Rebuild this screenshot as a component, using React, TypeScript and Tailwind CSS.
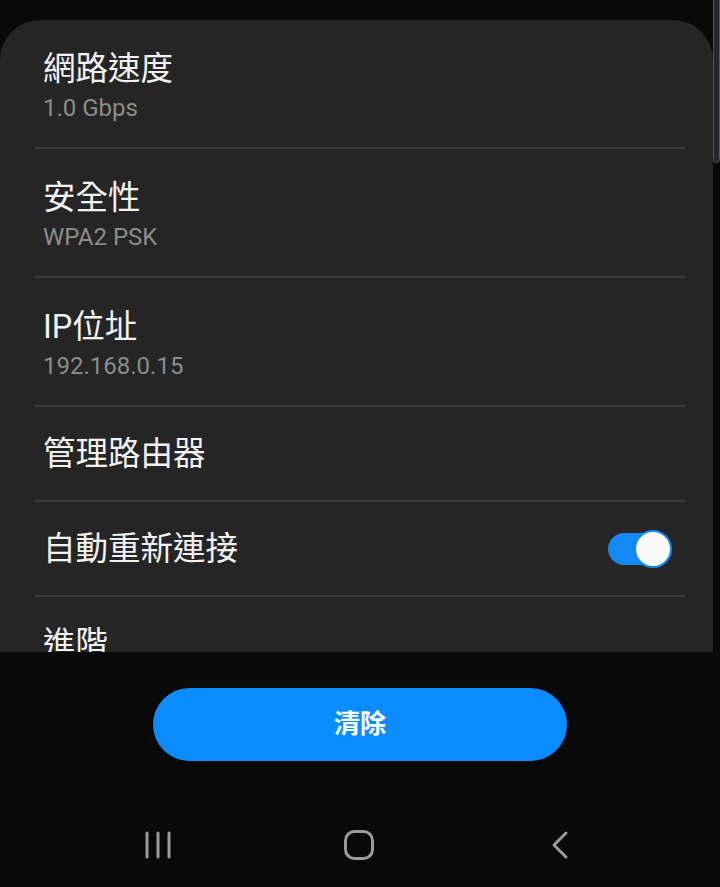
import React from "react";

const font = { fontFamily: "Roboto, 'Noto Sans CJK TC', sans-serif" };

function Divider() {
  return <div className="ml-[35px] mr-[28px] h-[2px] bg-[#3a3a3a]" />;
}

function TwoLine({ title, sub }: { title: string; sub: string }) {
  return (
    <div className="h-[127px] px-[43px] pt-[29px]">
      <div className="text-[32.5px] leading-[40px] text-[#f2f2f2]">{title}</div>
      <div className="mt-[3px] text-[24px] leading-[32px] text-[#8c8c8c]">{sub}</div>
    </div>
  );
}

export default function App() {
  return (
    <div className="w-[720px] h-[887px] bg-[#090909] flex flex-col relative overflow-hidden" style={font}>
      <div className="absolute right-[0px] top-[-10px] w-[7px] h-[173px] rounded-[4px] border border-[#55555c] bg-[#26262c]" />
      <div className="mt-[20px] mr-[7px] h-[632px] rounded-t-[40px] bg-[#252525] overflow-hidden shrink-0">
        <TwoLine title="網路速度" sub="1.0 Gbps" />
        <Divider />
        <TwoLine title="安全性" sub="WPA2 PSK" />
        <Divider />
        <TwoLine title="IP位址" sub="192.168.0.15" />
        <Divider />
        <div className="h-[93px] px-[43px] flex items-center">
          <div className="text-[32.5px] leading-[40px] text-[#f2f2f2]">管理路由器</div>
        </div>
        <Divider />
        <div className="h-[93px] pl-[43px] pr-[41px] flex items-center justify-between">
          <div className="text-[32.5px] leading-[40px] text-[#f2f2f2]">自動重新連接</div>
          <div className="relative w-[64px] h-[38px] flex items-center">
            <div className="w-[62px] h-[32px] rounded-full bg-[#1488f5]" />
            <div className="absolute right-0 top-0 w-[38px] h-[38px] rounded-full bg-[#fafafa] border-[2px] border-[#1488f5]" />
          </div>
        </div>
        <Divider />
        <div className="px-[43px] pt-[27px]">
          <div className="text-[32.5px] leading-[40px] text-[#f2f2f2]">進階</div>
        </div>
      </div>
      <div className="flex justify-center pt-[36px]">
        <div className="w-[414px] h-[73px] rounded-full bg-[#0a8cff] flex items-center justify-center">
          <span className="text-[26px] font-bold text-white">清除</span>
        </div>
      </div>
      <div className="flex-1 relative">
        <div className="absolute left-0 right-0 top-[84px] flex items-center">
          <svg className="absolute left-[143px]" width="30" height="30" viewBox="0 0 30 30">
            <g stroke="#9a9a9a" strokeWidth="3" strokeLinecap="round">
              <line x1="4" y1="3" x2="4" y2="27" />
              <line x1="15" y1="3" x2="15" y2="27" />
              <line x1="26" y1="3" x2="26" y2="27" />
            </g>
          </svg>
          <svg className="absolute left-[343px]" width="32" height="32" viewBox="0 0 32 32">
            <rect x="2.5" y="2.5" width="27" height="27" rx="9" fill="none" stroke="#9a9a9a" strokeWidth="3" />
          </svg>
          <svg className="absolute left-[548px]" width="24" height="30" viewBox="0 0 24 30">
            <polyline points="18,3 6,15 18,27" fill="none" stroke="#9a9a9a" strokeWidth="3" strokeLinecap="round" strokeLinejoin="round" />
          </svg>
        </div>
      </div>
    </div>
  );
}
